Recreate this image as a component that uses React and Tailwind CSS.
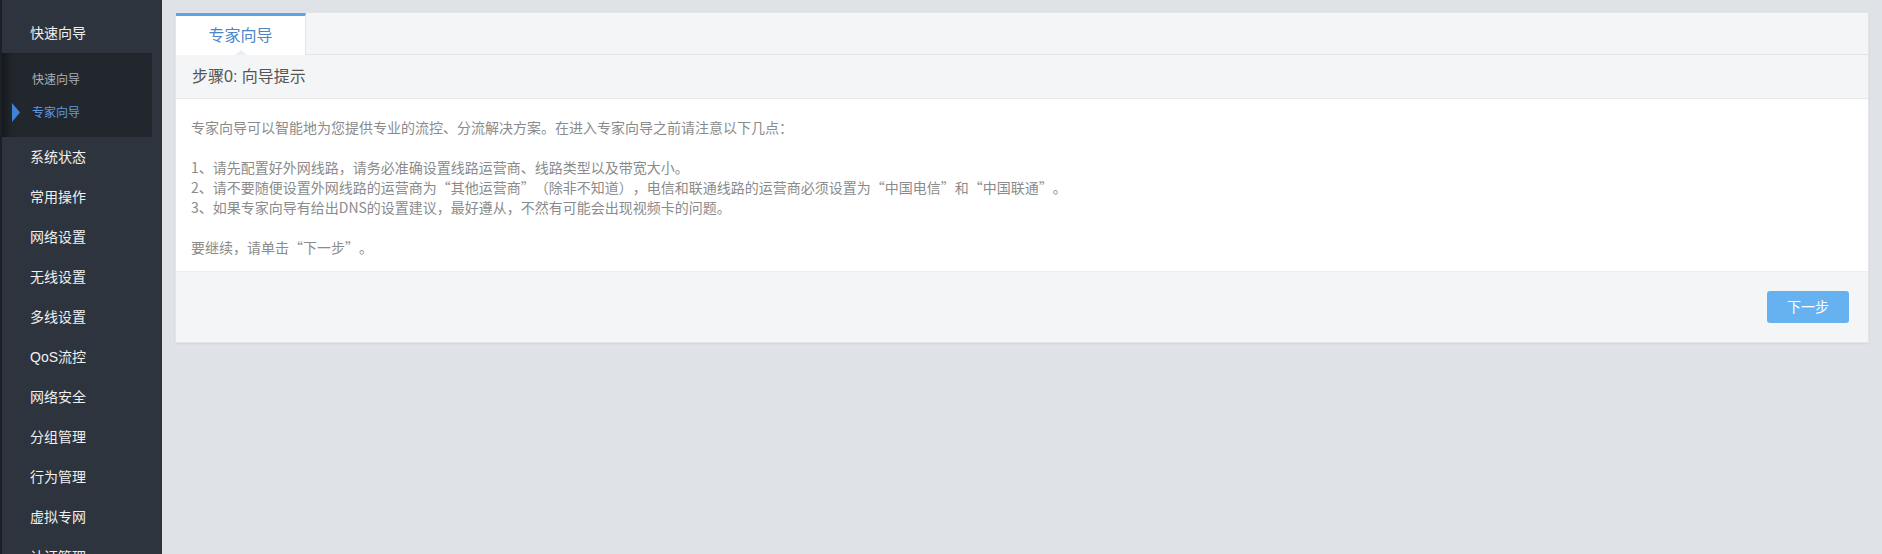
import React from "react";

const menuItems = [
  "系统状态",
  "常用操作",
  "网络设置",
  "无线设置",
  "多线设置",
  "QoS流控",
  "网络安全",
  "分组管理",
  "行为管理",
  "虚拟专网",
  "认证管理",
];

function Sidebar() {
  return (
    <aside className="w-[162px] shrink-0 h-full bg-[#2e343d] border-l-2 border-[#1c2025] pt-[13px] overflow-hidden">
      <div className="h-[40px] flex items-center pl-[28px] text-[14px] text-[#eef0f2]">
        快速向导
      </div>
      {/* submenu */}
      <div className="mr-[10px] bg-[#22272e] pt-[10px] pb-[8px] shadow-[inset_12px_0_8px_-8px_rgba(0,0,0,0.45)]">
        <div className="h-[33px] flex items-center pl-[30px] text-[12px] text-[#a9b0b9]">
          快速向导
        </div>
        <div className="relative h-[33px] flex items-center pl-[30px] text-[12px] text-[#5b9be6]">
          <svg
            className="absolute left-[10px] top-[7px]"
            width="9"
            height="19"
            viewBox="0 0 9 19"
          >
            <polygon points="0,0 8,9.5 0,19" fill="#3f82d8" />
          </svg>
          专家向导
        </div>
      </div>
      {menuItems.map((item) => (
        <div
          key={item}
          className="h-[40px] flex items-center pl-[28px] text-[14px] text-[#eef0f2]"
        >
          {item}
        </div>
      ))}
    </aside>
  );
}

function WizardPanel() {
  return (
    <div className="bg-white border border-[#e3e5e8] shadow-[0_1px_2px_rgba(0,0,0,0.06)]">
      {/* tabs */}
      <div className="h-[42px] flex bg-[#f4f5f7] border-b border-[#e2e4e7]">
        <div className="relative w-[130px] -mb-px bg-white border-t-[3px] border-t-[#5fa5e5] border-r border-r-[#e2e4e7] flex items-center justify-center text-[16px] text-[#4d86c6]">
          专家向导
          <span className="absolute left-1/2 -translate-x-1/2 bottom-0 w-0 h-0 border-l-[6px] border-r-[6px] border-b-[5px] border-l-transparent border-r-transparent border-b-[#eceef1]" />
        </div>
      </div>
      {/* step header */}
      <div className="h-[44px] flex items-center px-[16px] bg-[#f4f5f6] border-b border-[#e6e7ea] text-[16px] text-[#555]">
        步骤0: 向导提示
      </div>
      {/* body */}
      <div
        lang="zh-CN"
        className="bg-white px-[15px] pt-[18px] pb-[14px] text-[14px] leading-[20px] text-[#8b8b8b] font-['Noto_Sans_CJK_SC',sans-serif] [text-spacing-trim:space-all]"
      >
        专家向导可以智能地为您提供专业的流控、分流解决方案。在进入专家向导之前请注意以下几点：
        <br />
        <br />
        1、请先配置好外网线路，请务必准确设置线路运营商、线路类型以及带宽大小。
        <br />
        2、请不要随便设置外网线路的运营商为“其他运营商”（除非不知道），电信和联通线路的运营商必须设置为“中国电信”和“中国联通”。
        <br />
        3、如果专家向导有给出DNS的设置建议，最好遵从，不然有可能会出现视频卡的问题。
        <br />
        <br />
        要继续，请单击“下一步”。
      </div>
      {/* footer */}
      <div className="bg-[#f4f5f7] border-t border-[#eceef0] p-[19px] flex justify-end">
        <button className="w-[82px] h-[32px] rounded-[3px] bg-[#66b2f0] text-white text-[14px]">
          下一步
        </button>
      </div>
    </div>
  );
}

export default function App() {
  return (
    <div className="h-[554px] w-full flex overflow-hidden font-['Liberation_Sans','Noto_Sans_CJK_SC',sans-serif]">
      <Sidebar />
      <main className="flex-1 bg-[#dfe2e6] pt-[12px] px-[13px]">
        <WizardPanel />
      </main>
    </div>
  );
}
